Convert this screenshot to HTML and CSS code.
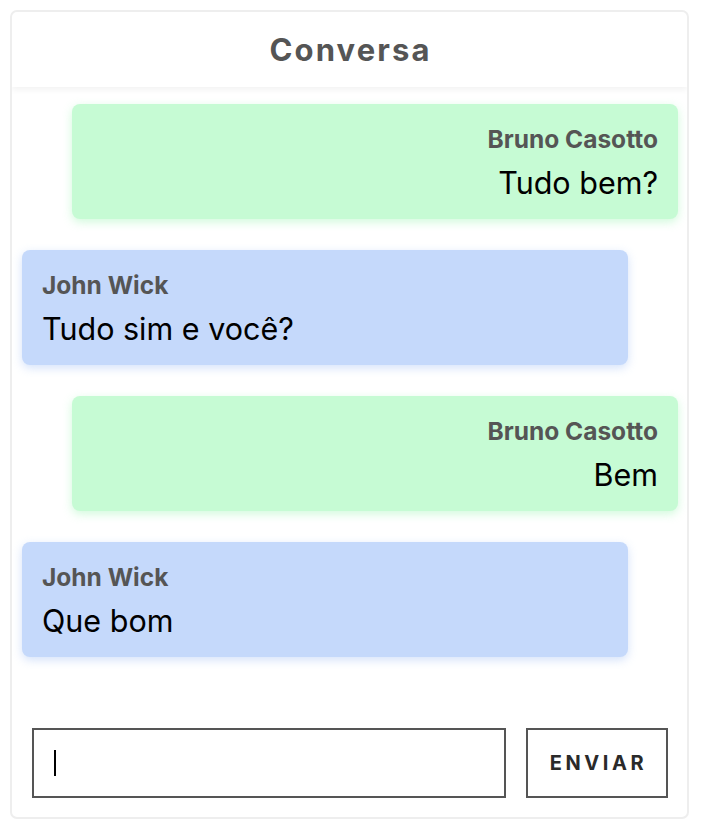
FILE: index.html
```html
<!DOCTYPE html>
<html lang="pt">
<head>
<meta charset="utf-8">
<title>Conversa</title>
<link rel="stylesheet" href="styles.css">
</head>
<body>
<div class="card">
  <div class="header">Conversa</div>
  <div class="messages">
    <div class="bubble mine">
      <div class="name">Bruno Casotto</div>
      <div class="text">Tudo bem?</div>
    </div>
    <div class="bubble theirs">
      <div class="name">John Wick</div>
      <div class="text">Tudo sim e você?</div>
    </div>
    <div class="bubble mine">
      <div class="name">Bruno Casotto</div>
      <div class="text">Bem</div>
    </div>
    <div class="bubble theirs">
      <div class="name">John Wick</div>
      <div class="text">Que bom</div>
    </div>
  </div>
  <form class="composer">
    <div class="field"><span class="caret"></span><input class="input" type="text" aria-label="Mensagem"></div>
    <button class="send" type="button">ENVIAR</button>
  </form>
</div>
</body>
</html>
```

FILE: styles.css
```css
html, body {
  margin: 0;
  padding: 0;
  background: #fff;
}

body {
  font-family: Inter, "Noto Sans", sans-serif;
  padding: 10px;
}

.card {
  box-sizing: border-box;
  width: 679px;
  height: 809px;
  border: 2px solid #eeeeee;
  border-radius: 7px;
  display: flex;
  flex-direction: column;
  overflow: hidden;
}

.header {
  height: 75px;
  flex: none;
  display: flex;
  align-items: center;
  justify-content: center;
  font-size: 31px;
  font-weight: 700;
  letter-spacing: 2.1px;
  padding-left: 2px;
  color: #555555;
  box-shadow: 0 3px 6px rgba(0, 0, 0, 0.05);
  position: relative;
  z-index: 1;
}

.messages {
  flex: 1;
  display: flex;
  flex-direction: column;
  gap: 31px;
  padding: 17px 9px 0 10px;
}

.bubble {
  box-sizing: border-box;
  width: 606px;
  height: 115px;
  padding: 20px 20px 0 20px;
  border-radius: 8px;
}

.mine {
  align-self: flex-end;
  text-align: right;
  background: #c6fbd4;
  box-shadow: 0 3px 10px rgba(150, 245, 175, 0.45);
}

.theirs {
  align-self: flex-start;
  background: #c5d9fb;
  box-shadow: 0 3px 10px rgba(160, 190, 245, 0.45);
}

.name {
  font-size: 24.5px;
  line-height: 30px;
  font-weight: 700;
  color: #555555;
  margin-bottom: 10px;
}

.text {
  font-size: 30.5px;
  line-height: 37px;
  color: #000;
}

.composer {
  flex: none;
  display: flex;
  gap: 20px;
  margin: 0;
  padding: 0 19px 19px 20px;
}

.field {
  flex: 1;
  box-sizing: border-box;
  height: 70px;
  border: 2px solid #555555;
  display: flex;
  align-items: center;
  padding-left: 20px;
}

.caret {
  flex: none;
  width: 2px;
  height: 26px;
  background: #000;
}

.input {
  flex: 1;
  border: none;
  outline: none;
  background: transparent;
  font-family: inherit;
  font-size: 24px;
  padding: 0;
  min-width: 0;
}

.send {
  box-sizing: border-box;
  width: 142px;
  height: 70px;
  border: 2px solid #555555;
  background: #fff;
  font-family: Inter, "Noto Sans", sans-serif;
  font-size: 20px;
  font-weight: 700;
  letter-spacing: 3.6px;
  padding: 0 0 0 3px;
  color: #2a2a2a;
}
```
